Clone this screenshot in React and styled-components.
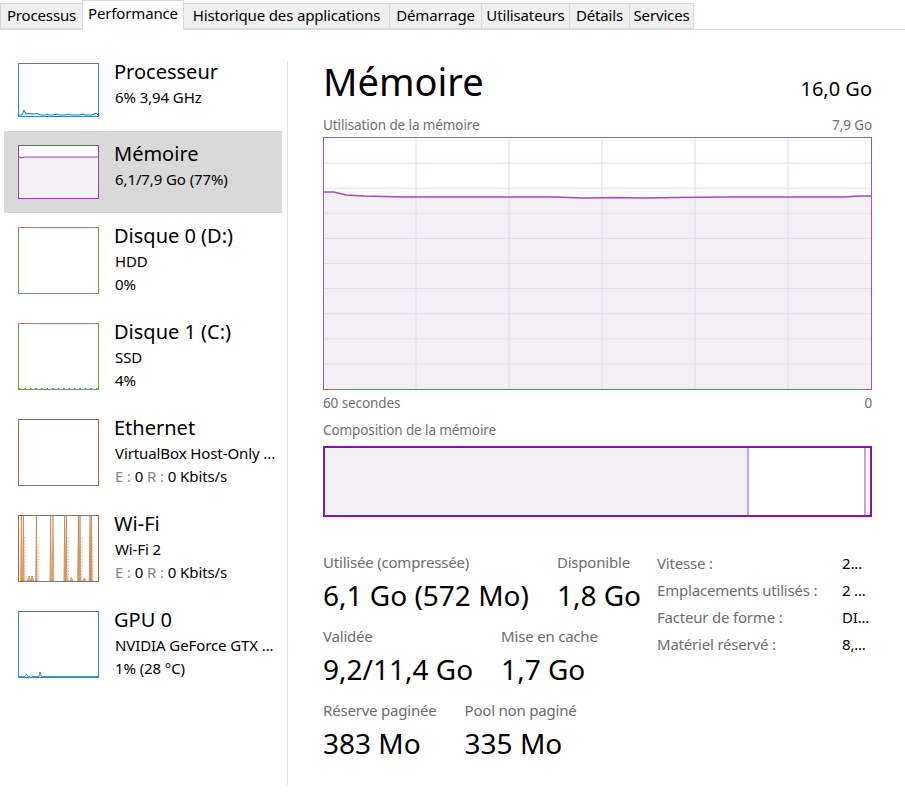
import React from 'react';
import styled, { createGlobalStyle } from 'styled-components';

const GlobalStyle = createGlobalStyle`
  html, body {
    margin: 0;
    padding: 0;
    background: #ffffff;
  }
  body {
    font-family: "Noto Sans", "Open Sans", sans-serif;
    color: #000;
  }
  * {
    box-sizing: border-box;
  }
`;

const Window = styled.div`
  width: 905px;
  height: 800px;
  overflow: hidden;
  background: #fff;
`;

const TabBar = styled.div`
  display: flex;
  align-items: flex-end;
  height: 30px;
  border-bottom: 1px solid #d9d9d9;
`;

const Tab = styled.div`
  width: ${p => p.w}px;
  height: ${p => (p.active ? 30 : 26)}px;
  margin-right: -1px;
  margin-bottom: ${p => (p.active ? -1 : 0)}px;
  border: 1px solid #d9d9d9;
  border-bottom: ${p => (p.active ? 'none' : '1px solid #d9d9d9')};
  background: ${p => (p.active ? '#ffffff' : '#f0f0f0')};
  position: relative;
  z-index: ${p => (p.active ? 1 : 0)};
  font-size: 15px;
  line-height: ${p => (p.active ? 25 : 23)}px;
  letter-spacing: -0.15px;
  text-align: center;
  white-space: nowrap;
`;

const Body = styled.div`
  display: flex;
  height: 770px;
`;

const Sidebar = styled.div`
  width: 287px;
  flex: none;
  padding: 19px 5px 0 4px;
`;

const Divider = styled.div`
  width: 1px;
  flex: none;
  background: #e3e3e3;
  margin: 31px 0 15px;
`;

const Item = styled.div`
  display: flex;
  align-items: flex-start;
  height: ${p => p.h}px;
  padding: 14px 0 0 14px;
  background: ${p => (p.selected ? '#d9d9d9' : 'transparent')};
`;

const Thumb = styled.div`
  width: 81px;
  height: ${p => p.h}px;
  flex: none;
  border: 1px solid ${p => p.color};
  background: #fff;
  margin-right: 15px;
  overflow: hidden;
  svg {
    display: block;
    width: 100%;
    height: 100%;
  }
`;

const Info = styled.div`
  min-width: 0;
  white-space: nowrap;
`;

const ItemTitle = styled.div`
  font-size: 20px;
  line-height: 28px;
  margin-top: -5px;
`;

const ItemSub = styled.div`
  font-size: 15px;
  line-height: 23px;
  margin-left: 1px;
  letter-spacing: -0.1px;
`;

const Dim = styled.span`
  color: #8a8a8a;
`;

const Main = styled.div`
  flex: 1;
  padding: 27px 33px 0 35px;
  min-width: 0;
`;

const Header = styled.div`
  display: flex;
  justify-content: space-between;
  align-items: baseline;
  height: 48px;
`;

const Title = styled.div`
  font-size: 38px;
  line-height: 48px;
`;

const Total = styled.div`
  font-size: 20px;
  line-height: 24px;
`;

const Caption = styled.div`
  display: flex;
  justify-content: space-between;
  font-size: 13.5px;
  line-height: 18px;
  color: #707070;
  letter-spacing: -0.1px;
  margin-top: ${p => p.mt}px;
`;

const Chart = styled.div`
  margin-top: ${p => p.mt}px;
  height: 253px;
  border: 1px solid #a64fc4;
  svg {
    display: block;
    width: 100%;
    height: 100%;
  }
`;

const Composition = styled.div`
  display: flex;
  margin-top: 7px;
  height: 71px;
  border: 2px solid #8b12ae;
`;

const Segment = styled.div`
  flex: ${p => p.grow} 0 0;
  background: ${p => p.fill};
  border-right: ${p => (p.sep ? '2px solid #caa2d9' : 'none')};
`;

const Stats = styled.div`
  display: flex;
  margin-top: 35px;
`;

const StatGrid = styled.div`
  flex: 1;
  min-width: 0;
`;

const StatRow = styled.div`
  display: flex;
  gap: 28px;
  margin-bottom: 13px;
`;

const Stat = styled.div`
  white-space: nowrap;
`;

const StatLabel = styled.div`
  font-size: 15px;
  line-height: 20px;
  letter-spacing: -0.2px;
  color: #6d6d6d;
`;

const StatValue = styled.div`
  font-size: 28px;
  line-height: 36px;
  margin-top: 5px;
`;

const Props = styled.div`
  width: 215px;
  flex: none;
  margin-top: -3px;
  display: grid;
  grid-template-columns: 185px 30px;
  grid-auto-rows: 27px;
  align-items: center;
  font-size: 15px;
  letter-spacing: -0.2px;
  white-space: nowrap;
`;

const PropLabel = styled.div`
  color: #6d6d6d;
`;

const PropValue = styled.div`
  color: #000;
  overflow: hidden;
`;

const tabs = [
  { label: 'Processus', w: 83 },
  { label: 'Performance', w: 102, active: true },
  { label: 'Historique des applications', w: 207 },
  { label: 'Démarrage', w: 93 },
  { label: 'Utilisateurs', w: 89 },
  { label: 'Détails', w: 61 },
  { label: 'Services', w: 65 },
];

const CpuGraph = () => (
  <svg viewBox="0 0 79 52" preserveAspectRatio="none">
    <polyline
      points="0,51 3,51 5,46 7,50 10,49.5 14,50 18,49.5 22,51 26,51 28,50 30,51 34,51 38,50 40,51 46,51 50,50 52,51 60,51 64,50 66,51 72,51 75,50 77,49 79,51"
      fill="#e3eff8"
      stroke="#1a7dc0"
      strokeWidth="1"
    />
  </svg>
);

const MemGraph = () => (
  <svg viewBox="0 0 79 52" preserveAspectRatio="none">
    <polygon points="0,11 3,12 5,11 79,11 79,52 0,52" fill="#f3f0f4" />
    <polyline points="0,11 3,12 5,11 79,11" fill="none" stroke="#9b3fb9" strokeWidth="1" />
  </svg>
);

const DiskGraph = ({ dots }) => (
  <svg viewBox="0 0 79 65" preserveAspectRatio="none">
    {dots && (
      <polyline
        points="0,64.5 79,64.5"
        fill="none"
        stroke="#4da60c"
        strokeWidth="1"
        strokeDasharray="1.5 4"
      />
    )}
  </svg>
);

const wifiSpikes = [2.4, 4.4, 17.4, 31.7, 34, 45.7, 47.4, 59.4, 61, 71, 72.4];

const WifiGraph = () => (
  <svg viewBox="0 0 79 65" preserveAspectRatio="none">
    {wifiSpikes.map((x, i) => (
      <polygon key={i} points={`${x - 0.8},65 ${x},0 ${x + 0.8},65`} fill="#e2b48e" stroke="#b5651f" strokeWidth="0.5" />
    ))}
    {[6, 19.5, 33, 49.5, 63, 74].map((x, i) => (
      <line key={'d' + i} x1={x} y1="65" x2={x} y2="20" stroke="#dfb08a" strokeWidth="0.8" strokeDasharray="1.5 1.5" />
    ))}
    <polygon points="8,65 10,60 12,65 13,60 15,65" fill="#e2b48e" stroke="#b5651f" strokeWidth="0.5" />
    <polygon points="51,65 52.5,61 54,65" fill="#e2b48e" stroke="#b5651f" strokeWidth="0.5" />
    <polygon points="64,65 65.5,62 67,65" fill="#e2b48e" stroke="#b5651f" strokeWidth="0.5" />
  </svg>
);

const GpuGraph = () => (
  <svg viewBox="0 0 79 65" preserveAspectRatio="none">
    <polyline
      points="0,64.5 6,64.5 7.5,62 9,64.5 11,64.5 12,63.5 13,64.5 20,64.5 21,60 22.5,64.5 79,64.5"
      fill="#e3eff8"
      stroke="#1a7dc0"
      strokeWidth="0.8"
    />
  </svg>
);

const resources = [
  {
    key: 'cpu', title: 'Processeur', color: '#2a88c9', thumbH: 54, h: 82,
    lines: ['6%  3,94 GHz'], graph: <CpuGraph />,
  },
  {
    key: 'mem', title: 'Mémoire', color: '#9b3fb9', thumbH: 54, h: 82, selected: true,
    lines: ['6,1/7,9 Go (77%)'], graph: <MemGraph />,
  },
  {
    key: 'd0', title: 'Disque 0 (D:)', color: '#5bb025', thumbH: 67, h: 96,
    lines: ['HDD', '0%'], graph: <DiskGraph />,
  },
  {
    key: 'd1', title: 'Disque 1 (C:)', color: '#5bb025', thumbH: 67, h: 96,
    lines: ['SSD', '4%'], graph: <DiskGraph dots />,
  },
  {
    key: 'eth', title: 'Ethernet', color: '#b5651f', thumbH: 67, h: 96,
    lines: ['VirtualBox Host-Only ...', 'net'], graph: null,
  },
  {
    key: 'wifi', title: 'Wi-Fi', color: '#b5651f', thumbH: 67, h: 96,
    lines: ['Wi-Fi 2', 'net'], graph: <WifiGraph />,
  },
  {
    key: 'gpu', title: 'GPU 0', color: '#2a88c9', thumbH: 67, h: 96,
    lines: ['NVIDIA GeForce GTX ...', '1%  (28 °C)'], graph: <GpuGraph />,
  },
];

const NetLine = () => (
  <>
    <Dim>E : </Dim>0 <Dim>R : </Dim>0 Kbits/s
  </>
);

const usagePath = () => {
  const pts = [[0, 54], [10, 54], [22, 57], [40, 58], [80, 59], [150, 59], [230, 59], [260, 60], [290, 59.5], [320, 60], [350, 59.5], [400, 59], [460, 59], [520, 59], [535, 58], [547, 58]];
  return pts.map(p => p.join(',')).join(' ');
};

const MemoryChart = () => {
  const w = 547;
  const h = 251;
  const rows = Array.from({ length: 9 }, (_, i) => ((i + 1) * h) / 10);
  const cols = [92, 185, 278, 371, 464];
  return (
    <svg viewBox={`0 0 ${w} ${h}`} preserveAspectRatio="none">
      <polygon points={`${usagePath()} ${w},${h} 0,${h}`} fill="#f3f0f5" />
      {rows.map(y => (
        <line key={'r' + y} x1="0" y1={y} x2={w} y2={y} stroke="#ead6f0" strokeWidth="1" />
      ))}
      {cols.map(x => (
        <line key={'c' + x} x1={x} y1="0" x2={x} y2={h} stroke="#ead6f0" strokeWidth="1" />
      ))}
      <polyline points={usagePath()} fill="none" stroke="#a24cc0" strokeWidth="1.6" />
    </svg>
  );
};

const stats = [
  [
    { label: 'Utilisée (compressée)', value: '6,1 Go (572 Mo)' },
    { label: 'Disponible', value: '1,8 Go' },
  ],
  [
    { label: 'Validée', value: '9,2/11,4 Go' },
    { label: 'Mise en cache', value: '1,7 Go' },
  ],
  [
    { label: 'Réserve paginée', value: '383 Mo' },
    { label: 'Pool non paginé', value: '335 Mo' },
  ],
];

const props = [
  ['Vitesse :', '2...'],
  ['Emplacements utilisés :', '2 ...'],
  ['Facteur de forme :', 'DI...'],
  ['Matériel réservé :', '8,...'],
];

export default function App() {
  return (
    <Window>
      <GlobalStyle />
      <TabBar>
        {tabs.map(t => (
          <Tab key={t.label} w={t.w} active={t.active}>{t.label}</Tab>
        ))}
      </TabBar>
      <Body>
        <Sidebar>
          {resources.map(r => (
            <Item key={r.key} h={r.h} selected={r.selected}>
              <Thumb h={r.thumbH} color={r.color}>{r.graph}</Thumb>
              <Info>
                <ItemTitle>{r.title}</ItemTitle>
                {r.lines.map((l, i) => (
                  <ItemSub key={i}>{l === 'net' ? <NetLine /> : l}</ItemSub>
                ))}
              </Info>
            </Item>
          ))}
        </Sidebar>
        <Divider />
        <Main>
          <Header>
            <Title>Mémoire</Title>
            <Total>16,0 Go</Total>
          </Header>
          <Caption mt={11}>
            <span>Utilisation de la mémoire</span>
            <span>7,9 Go</span>
          </Caption>
          <Chart mt={3}>
            <MemoryChart />
          </Chart>
          <Caption mt={4}>
            <span>60 secondes</span>
            <span>0</span>
          </Caption>
          <Caption mt={9}>
            <span>Composition de la mémoire</span>
          </Caption>
          <Composition>
            <Segment grow={422} fill="#f3f0f5" sep />
            <Segment grow={115} fill="#ffffff" sep />
            <Segment grow={4} fill="#ffffff" />
          </Composition>
          <Stats>
            <StatGrid>
              {stats.map((row, i) => (
                <StatRow key={i}>
                  {row.map(s => (
                    <Stat key={s.label}>
                      <StatLabel>{s.label}</StatLabel>
                      <StatValue>{s.value}</StatValue>
                    </Stat>
                  ))}
                </StatRow>
              ))}
            </StatGrid>
            <Props>
              {props.map(([l, v]) => (
                <React.Fragment key={l}>
                  <PropLabel>{l}</PropLabel>
                  <PropValue>{v}</PropValue>
                </React.Fragment>
              ))}
            </Props>
          </Stats>
        </Main>
      </Body>
    </Window>
  );
}
